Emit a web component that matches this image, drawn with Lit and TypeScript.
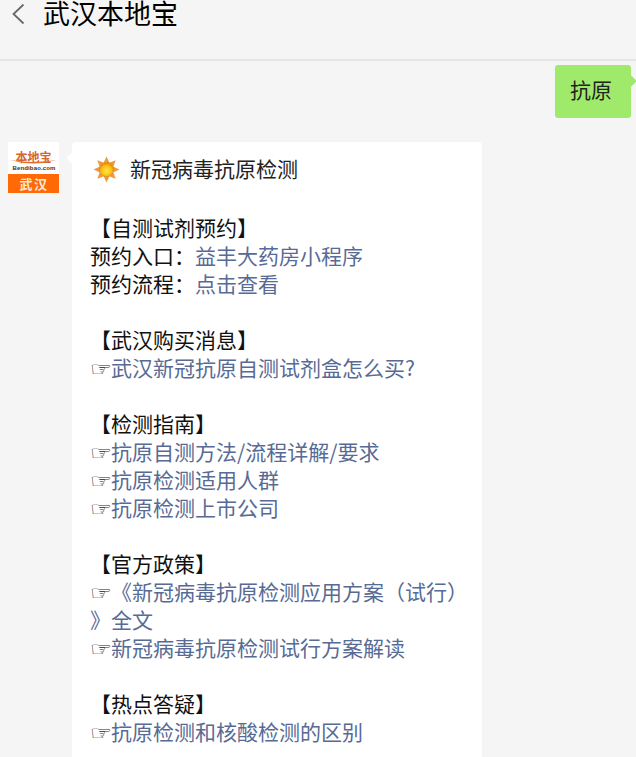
import { LitElement, html, css, svg } from "lit";
import { customElement } from "lit/decorators.js";

type Line = { t: "h" | "l" | "p" | "b"; label?: string; text?: string };

const lines: Line[] = [
  { t: "h", text: "【自测试剂预约】" },
  { t: "p", label: "预约入口：", text: "益丰大药房小程序" },
  { t: "p", label: "预约流程：", text: "点击查看" },
  { t: "b" },
  { t: "h", text: "【武汉购买消息】" },
  { t: "l", text: "武汉新冠抗原自测试剂盒怎么买?" },
  { t: "b" },
  { t: "h", text: "【检测指南】" },
  { t: "l", text: "抗原自测方法/流程详解/要求" },
  { t: "l", text: "抗原检测适用人群" },
  { t: "l", text: "抗原检测上市公司" },
  { t: "b" },
  { t: "h", text: "【官方政策】" },
  { t: "l", text: "《新冠病毒抗原检测应用方案（试行）" },
  { t: "p", label: "", text: "》全文" },
  { t: "l", text: "新冠病毒抗原检测试行方案解读" },
  { t: "b" },
  { t: "h", text: "【热点答疑】" },
  { t: "l", text: "抗原检测和核酸检测的区别" },
];

const rays = [0, 45, 90, 135, 180, 225, 270, 315];

@customElement("app-root")
export class AppRoot extends LitElement {
  static styles = css`
    :host {
      display: block;
      width: 636px;
      height: 757px;
      overflow: hidden;
      background: #f5f5f5;
      color: #111;
      font-family: "Noto Sans CJK SC", sans-serif;
      font-size: 21px;
      line-height: 28px;
      text-spacing-trim: space-all;
    }
    .header {
      height: 59px;
      border-bottom: 2px solid #e6e6e6;
      display: flex;
      align-items: flex-start;
      gap: 19px;
      padding-left: 12px;
    }
    .back {
      margin-top: 4px;
      flex: none;
    }
    .title {
      font-size: 27px;
      line-height: 26px;
      color: #000;
      margin-left: -1px;
    }
    .me {
      display: flex;
      justify-content: flex-end;
      padding: 4px 5px 0 0;
    }
    .bubble {
      position: relative;
      background: #a0ea6b;
      border-radius: 3px;
      padding: 10px 19px 15px 15px;
      color: #222;
    }
    .bubble::after {
      content: "";
      position: absolute;
      right: -4px;
      top: 12px;
      width: 8px;
      height: 8px;
      background: #a0ea6b;
      transform: rotate(45deg);
    }
    .other {
      display: flex;
      align-items: flex-start;
      gap: 13px;
      padding: 24px 0 0 8px;
    }
    .avatar {
      flex: none;
      display: block;
    }
    .card {
      position: relative;
      width: 410px;
      box-sizing: border-box;
      height: 700px;
      background: #fff;
      border-radius: 3px 3px 0 0;
      padding: 12px 0 0 18px;
      box-shadow: 0 0 1px #e8e8e8;
    }
    .card::before {
      content: "";
      position: absolute;
      left: -4px;
      top: 12px;
      width: 8px;
      height: 8px;
      background: #fff;
      transform: rotate(45deg);
    }
    .head {
      display: flex;
      align-items: center;
      gap: 10px;
      height: 28px;
      padding-left: 3px;
      color: #222;
      margin-bottom: 31px;
    }
    .head svg {
      position: relative;
      top: 1px;
    }
    .row {
      height: 28px;
      white-space: nowrap;
    }
    .link {
      color: #576b95;
    }
    .hand {
      display: inline-block;
      width: 21px;
      font-family: "DejaVu Sans", sans-serif;
      font-size: 21px;
      color: #1c1c1c;
      transform: scale(1.18, 0.95);
      transform-origin: 0 70%;
    }
  `;

  private renderLine(l: Line) {
    if (l.t === "b") return html`<div class="row"></div>`;
    if (l.t === "h") return html`<div class="row">${l.text}</div>`;
    if (l.t === "p")
      return html`<div class="row">${l.label}<span class="link">${l.text}</span></div>`;
    return html`<div class="row link"><span class="hand">☞</span>${l.text}</div>`;
  }

  render() {
    return html`
      <div class="header">
        <svg class="back" width="13" height="20" viewBox="0 0 13 20">
          <path d="M11.5 .5 L1.5 10 L11.5 19.5" fill="none" stroke="#666" stroke-width="1.8" />
        </svg>
        <div class="title">武汉本地宝</div>
      </div>
      <div class="me"><div class="bubble">抗原</div></div>
      <div class="other">
        <svg class="avatar" width="51" height="51" viewBox="0 0 51 51">
          <rect width="51" height="51" fill="#fff" />
          <rect y="32" width="51" height="19" fill="#ff6a06" />
          <text x="25.5" y="19.5" text-anchor="middle" font-size="12" font-weight="700" fill="#d9652a"
            font-family="Noto Sans CJK SC">本地宝</text>
          <path d="M2 18 Q25 25 49 18 Q25 22 2 18Z" fill="#e0702a" />
          <text x="26" y="28" text-anchor="middle" font-size="6" font-weight="700" fill="#333"
            letter-spacing="0.15" font-family="Liberation Sans">Bendibao.com</text>
          <text x="26" y="46.5" text-anchor="middle" font-size="13" font-weight="700" fill="#fde8d8"
            letter-spacing="1.5" font-family="Noto Sans CJK SC">武汉</text>
        </svg>
        <div class="card">
          <div class="head">
            <svg width="27" height="27" viewBox="0 0 27 27">
              <defs>
                <radialGradient id="s" cx="50%" cy="60%" r="55%">
                  <stop offset="0%" stop-color="#ffe94a" />
                  <stop offset="70%" stop-color="#fdbb0e" />
                  <stop offset="100%" stop-color="#e9890b" />
                </radialGradient>
              </defs>
              ${rays.map(
                (a) => svg`<path d="M13.5 0.5 L16.5 7 L10.5 7Z" fill="#ee9a3c"
                  transform="rotate(${a} 13.5 13.5)" />`
              )}
              <circle cx="13.5" cy="13.5" r="7" fill="url(#s)" stroke="#d98a20" stroke-width="0.6" />
            </svg>
            <span>新冠病毒抗原检测</span>
          </div>
          ${lines.map((l) => this.renderLine(l))}
        </div>
      </div>
    `;
  }
}
